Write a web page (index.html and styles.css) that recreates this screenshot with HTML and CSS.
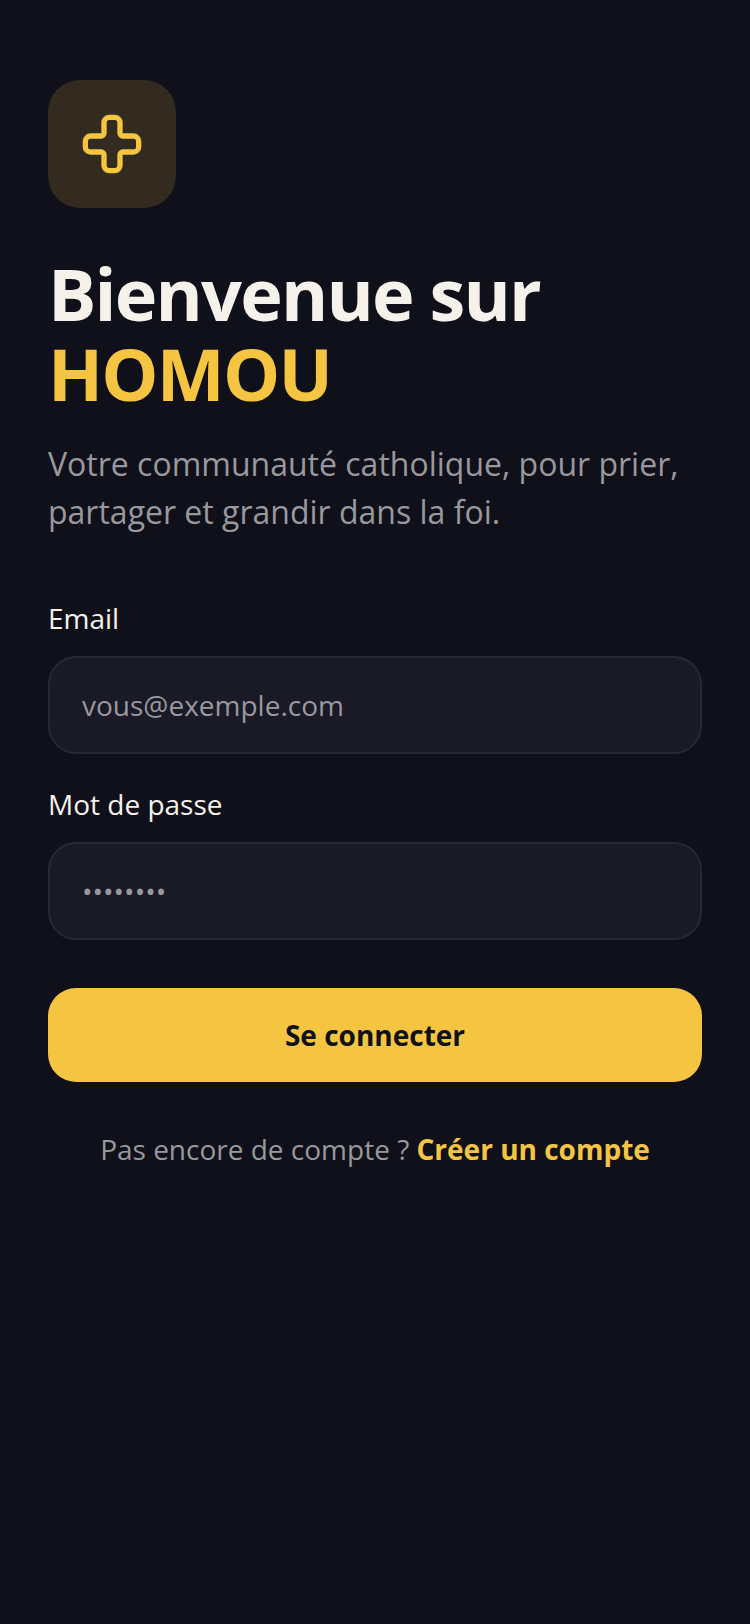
FILE: index.html
```html
<!DOCTYPE html>
<html lang="fr">
<head>
  <meta charset="UTF-8">
  <meta name="viewport" content="width=device-width, initial-scale=1.0">
  <title>HOMOU</title>
  <link rel="stylesheet" href="styles.css">
</head>
<body>
<main class="login">
  <div class="logo">
    <svg width="64" height="64" viewBox="0 0 24 24" fill="none" stroke="#f5c542" stroke-width="2" stroke-linecap="round" stroke-linejoin="round">
      <path d="M4 9a2 2 0 0 0-2 2v2a2 2 0 0 0 2 2h4a1 1 0 0 1 1 1v4a2 2 0 0 0 2 2h2a2 2 0 0 0 2-2v-4a1 1 0 0 1 1-1h4a2 2 0 0 0 2-2v-2a2 2 0 0 0-2-2h-4a1 1 0 0 1-1-1V4a2 2 0 0 0-2-2h-2a2 2 0 0 0-2 2v4a1 1 0 0 1-1 1z"/>
    </svg>
  </div>
  <h1 class="title">Bienvenue sur<br><span class="accent">HOMOU</span></h1>
  <p class="subtitle">Votre communauté catholique, pour prier, partager et grandir dans la foi.</p>
  <form class="form">
    <label class="field-label" for="email">Email</label>
    <input class="field" id="email" type="email" placeholder="vous@exemple.com">
    <label class="field-label" for="password">Mot de passe</label>
    <input class="field" id="password" type="password" value="password">
    <button class="submit" type="button">Se connecter</button>
  </form>
  <p class="signup">Pas encore de compte ? <a class="signup-link" href="#">Créer un compte</a></p>
</main>
</body>
</html>
```

FILE: styles.css
```css
* {
  box-sizing: border-box;
}

body {
  margin: 0;
  min-height: 1624px;
  background-color: #0f1019;
  font-family: "Open Sans", sans-serif;
}

.login {
  padding: 80px 48px 0;
}

.logo {
  width: 128px;
  height: 128px;
  border-radius: 32px;
  background-color: #332b20;
  display: flex;
  align-items: center;
  justify-content: center;
}

.title {
  margin: 45px 0 0;
  font-size: 72px;
  line-height: 80px;
  font-weight: 700;
  letter-spacing: -1.8px;
  color: #f5f2ec;
}

.accent {
  color: #f5c542;
}

.subtitle {
  margin: 27px 0 0;
  font-size: 32px;
  line-height: 48px;
  color: #98989d;
}

.form {
  margin-top: 58px;
  display: flex;
  flex-direction: column;
}

.field-label {
  font-size: 28px;
  line-height: 48px;
  color: #f5f2ec;
  margin-bottom: 14px;
}

.field {
  width: 100%;
  height: 98px;
  margin-bottom: 26px;
  padding: 0 32px;
  border: 2px solid #262835;
  border-radius: 28px;
  background-color: #191a26;
  font-family: "Open Sans", sans-serif;
  font-size: 28px;
  color: #98989d;
}

.field::placeholder {
  color: #98989d;
  opacity: 1;
}

.submit {
  margin-top: 22px;
  height: 94px;
  border: none;
  border-radius: 28px;
  background-color: #f5c542;
  font-family: "Open Sans", sans-serif;
  font-size: 28px;
  font-weight: 700;
  color: #0f1019;
}

.signup {
  margin: 47px 0 0;
  text-align: center;
  font-size: 28px;
  line-height: 40px;
  color: #98989d;
}

.signup-link {
  font-weight: 700;
  color: #f5c542;
  text-decoration: none;
}
```
